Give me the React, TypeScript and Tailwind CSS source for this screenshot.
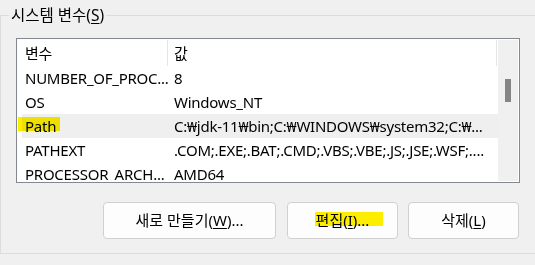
const rows = [
  { name: "NUMBER_OF_PROC...", value: "8" },
  { name: "OS", value: "Windows_NT" },
  { name: "Path", value: "C:₩jdk-11₩bin;C:₩WINDOWS₩system32;C:₩...", selected: true },
  { name: "PATHEXT", value: ".COM;.EXE;.BAT;.CMD;.VBS;.VBE;.JS;.JSE;.WSF;...." },
  { name: "PROCESSOR_ARCH...", value: "AMD64" },
];

const font = { fontFamily: '"Noto Sans", "Noto Sans CJK KR", sans-serif' };

export default function App() {
  return (
    <div
      className="w-[535px] h-[265px] bg-[#f0f0f0] overflow-hidden text-[15px] text-black pt-[15px]"
      style={font}
    >
      {/* group box */}
      <div className="border-l border-t border-b border-[#dcdcdc] pb-[14px]">
        <div className="ml-[8px] -mt-[11px] px-[2px] w-fit bg-[#f0f0f0] leading-[20px] text-[15.5px]">
          시스템 변수(<span className="underline underline-offset-2">S</span>)
        </div>

        <div className="ml-[15px] w-[504px]">
          {/* list view */}
          <div className="mt-[13px] h-[145px] border border-[#828790] bg-white p-px flex">
            <div className="flex-1 overflow-hidden tracking-[-0.25px]">
              <div className="flex h-[26px] leading-[26px]">
                <div className="w-[149px] pl-[7px]">변수</div>
                <div className="w-px bg-[#e5e5e5]" />
                <div className="w-[328px] pl-[6px]">값</div>
                <div className="w-px bg-[#e5e5e5]" />
              </div>
              {rows.map((r) => (
                <div
                  key={r.name}
                  className={`ml-[4px] flex h-[24px] leading-[24px] whitespace-nowrap ${
                    r.selected ? "bg-[#efefef]" : ""
                  }`}
                >
                  <div className="relative w-[152px] pl-[3px]">
                    {r.selected && (
                      <span className="absolute left-[-9px] top-[3px] w-[47px] h-[14px] bg-[#fdee00] mix-blend-multiply" />
                    )}
                    <span className="relative">{r.name}</span>
                  </div>
                  <div className="flex-1">{r.value}</div>
                </div>
              ))}
            </div>
            {/* scrollbar */}
            <div className="w-[20px] bg-[#f0f0f0] pt-[39px] pl-[7px]">
              <div className="w-[6px] h-[23px] bg-[#858585]" />
            </div>
          </div>

          {/* buttons */}
          <div className="mt-[19px] flex justify-end pr-px">
            <button className="w-[173px] h-[37px] rounded-[4px] border border-[#d0d0d0] bg-[#fdfdfd]">
              새로 만들기(<span className="underline underline-offset-2">W</span>)...
            </button>
            <button className="relative ml-[11px] w-[111px] h-[37px] rounded-[4px] border border-[#d0d0d0] bg-[#fdfdfd]">
              <span className="absolute left-[27px] top-[9px] w-[68px] h-[14px] bg-[#fdee00]" />
              <span className="relative">
                편집(<span className="underline underline-offset-2">I</span>)...
              </span>
            </button>
            <button className="ml-[10px] w-[111px] h-[37px] rounded-[4px] border border-[#d0d0d0] bg-[#fdfdfd]">
              삭제(<span className="underline underline-offset-2">L</span>)
            </button>
          </div>
        </div>
      </div>
    </div>
  );
}
